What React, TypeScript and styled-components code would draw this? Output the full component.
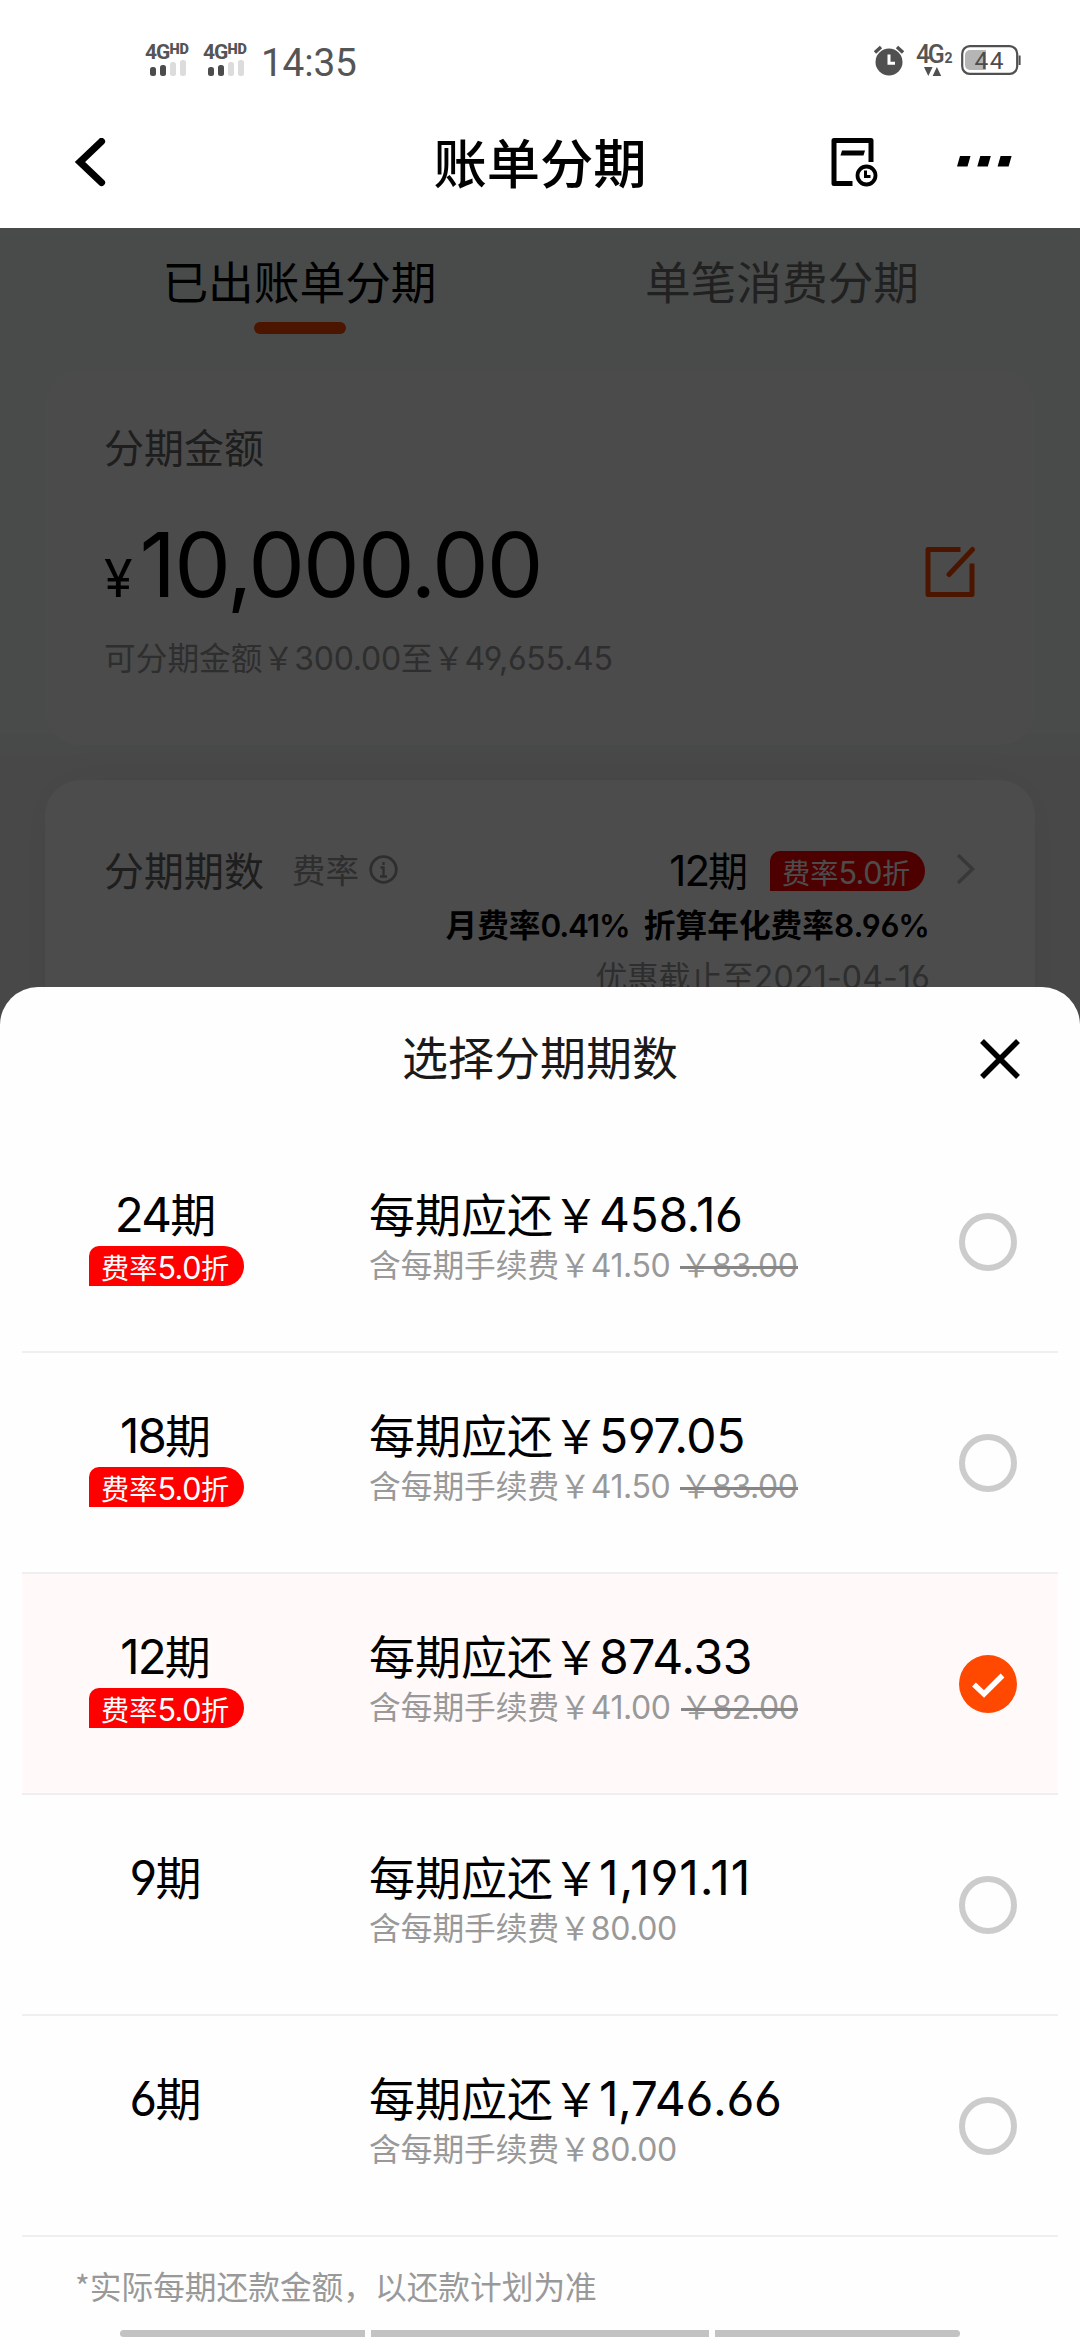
import React from "react";
import styled, { createGlobalStyle } from "styled-components";

const Global = createGlobalStyle`
  * { box-sizing: border-box; }
  html, body { margin: 0; padding: 0; background: #fff; }
  body { font-family: "Noto Sans CJK SC", sans-serif; color: #000; }
`;

const Screen = styled.div`
  position: relative;
  width: 1080px;
  height: 2340px;
  overflow: hidden;
  background: #fff;
`;

const StatusBar = styled.div`
  height: 98px;
  padding: 45px 58px 0 145px;
  display: flex;
  align-items: flex-start;
  color: #555;
  font-family: Roboto, sans-serif;
`;

const Signal = styled.div`
  width: 46px;
  margin-right: 12px;
  display: flex;
  flex-direction: column;
`;

const SignalLabel = styled.div`
  display: flex;
  align-items: flex-start;
  height: 15px;
  font-weight: 700;
  font-size: 21px;
  line-height: 15px;
  letter-spacing: -1px;
`;

const SignalHd = styled.span`
  font-size: 14.5px;
  line-height: 10px;
  letter-spacing: 0;
  font-weight: 900;
`;

const SignalBars = styled.div`
  display: flex;
  align-items: flex-end;
  gap: 4px;
  height: 16px;
  padding-left: 5px;
`;

const SignalBar = styled.i<{ $h: number; $on?: boolean }>`
  width: 6px;
  height: ${(p) => p.$h}px;
  border-radius: 2.5px;
  background: ${(p) => (p.$on ? "#4c4c4c" : "#dcdcdc")};
`;

const Clock = styled.div`
  font-size: 38.8px;
  line-height: 35px;
  letter-spacing: -0.2px;
  flex: 1;
`;

const Net = styled.div`
  width: 34px;
  margin: 0 11px 0 12px;
  display: flex;
  flex-direction: column;
`;

const NetLabel = styled.div`
  display: flex;
  align-items: flex-end;
  height: 18px;
  font-weight: 500;
  font-size: 25px;
  line-height: 17px;
  letter-spacing: -2.4px;
`;

const NetSub = styled.span`
  font-size: 14px;
  line-height: 10px;
  font-weight: 700;
  margin-left: 2px;
`;

const NavBar = styled.div`
  height: 130px;
  padding: 0 68px 0 74px;
  display: grid;
  grid-template-columns: 180px 1fr 181px;
  align-items: center;
`;

const NavTitle = styled.div`
  text-align: center;
  font-size: 53.3px;
  font-weight: 500;
  line-height: 60px;
  padding-bottom: 4px;
  padding-right: 5px;
`;

const NavActions = styled.div`
  display: flex;
  align-items: center;
  justify-content: space-between;
  height: 60px;
`;

const Page = styled.div`
  height: 2112px;
  background: linear-gradient(#f2faf6 0, #f2faf6 505px, #f2f2f2 530px);
  padding: 0 45px;
`;

const Tabs = styled.div`
  display: grid;
  grid-template-columns: 509px 456px;
  height: 142px;
  padding-top: 26px;
`;

const Tab = styled.div<{ $active?: boolean }>`
  display: flex;
  flex-direction: column;
  align-items: center;
  font-size: 45.7px;
  line-height: 52px;
  color: ${(p) => (p.$active ? "#000" : "#707070")};
`;

const TabMark = styled.i`
  width: 92px;
  height: 12px;
  margin-top: 16px;
  border-radius: 6px;
  background: #ff4800;
`;

const AmountCard = styled.div`
  height: 375px;
  border-radius: 36px;
  background: #fcfcfc;
  padding: 52px 59px 0;
`;

const TermCard = styled.div`
  height: 600px;
  margin-top: 35px;
  border-radius: 36px;
  background: #fff;
  box-shadow: 0 0 40px rgba(0, 0, 0, 0.05);
  padding: 65px 59px 0;
`;

const Label = styled.div`
  font-size: 40px;
  line-height: 48px;
  color: #666;
`;

const AmountRow = styled.div`
  display: flex;
  align-items: center;
  justify-content: space-between;
  height: 84px;
  margin-top: 60px;
`;

const Num = styled.span<{ $size: number; $track?: number; $weight?: number }>`
  font-family: Inter, "Noto Sans CJK SC", sans-serif;
  font-feature-settings: "cv03", "cv04";
  font-size: ${(p) => p.$size}px;
  letter-spacing: ${(p) => p.$track ?? 0}px;
  font-weight: ${(p) => p.$weight ?? "inherit"};
  line-height: 0;
`;

const Amount = styled.div`
  display: flex;
  align-items: baseline;
  gap: 7px;
  line-height: 84px;
`;

const Hint = styled.div`
  margin-top: 22px;
  font-size: 31.7px;
  line-height: 40px;
  color: #999;
  white-space: nowrap;
`;

const TermRow = styled.div`
  display: flex;
  align-items: center;
  height: 48px;
`;

const Rate = styled.div`
  margin-left: 28px;
  margin-right: 10px;
  font-size: 33.5px;
  line-height: 40px;
  color: #999;
`;

const TermValue = styled.div`
  margin-left: auto;
  margin-right: 22px;
  font-size: 40px;
  line-height: 46px;
  white-space: nowrap;
`;

const Tag = styled.div`
  width: 155px;
  height: 40px;
  padding-left: 12px;
  border-radius: 10px 20px 20px 0;
  background: #f00;
  color: #fff;
  font-size: 28.2px;
  line-height: 41px;
  white-space: nowrap;
`;

const TagSlot = styled.div`
  padding-top: 4px;
`;

const RateLine = styled.div`
  margin: 10px 46px 0 0;
  text-align: right;
  font-size: 31.7px;
  line-height: 40px;
  font-weight: 700;
  white-space: pre;
`;

const OfferLine = styled.div`
  margin: 12px 46px 0 0;
  text-align: right;
  font-size: 31.7px;
  line-height: 40px;
  color: #999;
  white-space: nowrap;
`;

const Chevron = styled.svg`
  margin-left: 31px;
  flex: none;
`;

const Mask = styled.div`
  position: absolute;
  left: 0;
  right: 0;
  top: 228px;
  bottom: 0;
  background: rgba(0, 0, 0, 0.7);
`;

const Sheet = styled.div`
  position: absolute;
  left: 0;
  right: 0;
  bottom: 0;
  height: 1353px;
  border-radius: 38px 38px 0 0;
  background: #fefefe;
  display: flex;
  flex-direction: column;
`;

const SheetHead = styled.div`
  height: 145px;
  padding: 0 61px 0 0;
  display: grid;
  grid-template-columns: 101px 1fr 40px;
  align-items: center;
`;

const CloseIcon = styled.svg`
  margin-top: -2px;
`;

const SheetTitle = styled.div`
  text-align: center;
  font-size: 46px;
  line-height: 54px;
  padding-bottom: 9px;
  color: #1a1a1a;
`;

const List = styled.div`
  padding: 0 22px;
`;

const Row = styled.div<{ $selected?: boolean }>`
  height: 221px;
  border-bottom: 2px solid #efefef;
  background: ${(p) => (p.$selected ? "#fffaf9" : "transparent")};
  display: grid;
  grid-template-columns: 67px 155px 125px 1fr 58px 41px;
  padding-top: 56px;
`;

const Term = styled.div`
  grid-column: 2;
  display: flex;
  flex-direction: column;
`;

const TermName = styled.div`
  text-align: center;
  font-size: 46px;
  line-height: 48px;
  height: 58px;
  padding-right: 2px;
`;

const Detail = styled.div`
  grid-column: 4;
  white-space: nowrap;
`;

const Pay = styled.div`
  font-size: 46px;
  line-height: 48px;
  height: 57px;
`;

const Fee = styled.div`
  font-size: 31.7px;
  line-height: 37px;
  color: #999;
  display: flex;
  gap: 10px;
`;

const Struck = styled.span`
  position: relative;

  &::after {
    content: "";
    position: absolute;
    left: 0;
    right: 0;
    top: 21px;
    height: 3px;
    background: #858585;
  }
`;

const Radio = styled.div<{ $on?: boolean }>`
  grid-column: 5;
  margin-top: 25px;
  width: 58px;
  height: 58px;
  border-radius: 50%;
  border: ${(p) => (p.$on ? "0" : "6px solid #ccc")};
  background: ${(p) => (p.$on ? "#ff4800" : "transparent")};
`;

const Note = styled.div`
  padding: 28px 0 0 75px;
  font-size: 31.7px;
  line-height: 40px;
  color: #999;
  flex: 1;
`;

const GestureBar = styled.div`
  display: grid;
  grid-template-columns: 245px 338px 245px;
  gap: 6px;
  padding: 0 120px 3px;
`;

const Grip = styled.i<{ $side?: "l" | "r" }>`
  height: 7px;
  background: #c2c2c2;
  border-radius: ${(p) => (p.$side === "l" ? "4px 0 0 4px" : p.$side === "r" ? "0 4px 4px 0" : "0")};
`;

interface Plan {
  term: string;
  pay: string;
  fee: string;
  was?: string;
  selected?: boolean;
}

const plans: Plan[] = [
  { term: "24", pay: "458.16", fee: "41.50", was: "83.00" },
  { term: "18", pay: "597.05", fee: "41.50", was: "83.00" },
  { term: "12", pay: "874.33", fee: "41.00", was: "82.00", selected: true },
  { term: "9", pay: "1,191.11", fee: "80.00" },
  { term: "6", pay: "1,746.66", fee: "80.00" },
];

// The figure "1" is narrow in this face, so amounts rich in ones get looser tracking.
const payTrack = (pay: string) => (pay.split("1").length > 4 ? 0.9 : -0.4);

const DiscountTag = () => (
  <Tag>
    费率<Num $size={30.5} $track={-0.5} $weight={400}>5.0</Num>折
  </Tag>
);

const SignalMeter = () => (
  <Signal>
    <SignalLabel>
      4G<SignalHd>HD</SignalHd>
    </SignalLabel>
    <SignalBars>
      <SignalBar $h={9} $on />
      <SignalBar $h={11} $on />
      <SignalBar $h={14} />
      <SignalBar $h={16} />
    </SignalBars>
  </Signal>
);

export default function App() {
  return (
    <Screen>
      <Global />
      <StatusBar>
        <SignalMeter />
        <SignalMeter />
        <Clock>14:35</Clock>
        <svg width="30" height="31" viewBox="0 0 30 31">
          <circle cx="15" cy="17" r="13.5" fill="#505050" />
          <path d="M1 7.5L7 2M29 7.5L23 2" stroke="#505050" strokeWidth="3.4" />
          <path d="M15 9.5V18.3H21" stroke="#fff" strokeWidth="3" fill="none" />
        </svg>
        <Net>
          <NetLabel>
            4G<NetSub>2</NetSub>
          </NetLabel>
          <svg width="34" height="13" viewBox="0 0 34 13">
            <path d="M8 4H16.6L12.3 13ZM16.6 13H25.2L20.9 4Z" fill="#505050" />
          </svg>
        </Net>
        <svg width="61" height="31" viewBox="0 0 61 31">
          <rect x="1.2" y="1.2" width="55" height="27.6" rx="7.5" fill="none" stroke="#505050" strokeWidth="2.2" />
          <path d="M25 5H9a5 5 0 0 0-5 5V20a5 5 0 0 0 5 5H25Z" fill="#b5b5b5" />
          <path d="M58.6 10.5V20" stroke="#505050" strokeWidth="2" />
          <text x="28" y="24.4" textAnchor="middle" fontFamily="Roboto, sans-serif" fontSize="24.5" fill="#4c4c4c" textLength="29">
            44
          </text>
        </svg>
      </StatusBar>
      <NavBar>
        <svg width="33" height="50" viewBox="0 0 33 50">
          <path d="M27.5 3.5L6 24L27.5 44.5" fill="none" stroke="#000" strokeWidth="7.2" strokeLinecap="round" />
        </svg>
        <NavTitle>账单分期</NavTitle>
        <NavActions>
          <svg width="48" height="52" viewBox="0 0 48 52">
            <path d="M21.5 46.5H3V3.5H40V25" fill="none" stroke="#000" strokeWidth="5" strokeLinejoin="round" />
            <path d="M11 13.5H34L32.5 18.5H9.5Z" fill="#000" />
            <circle cx="35.5" cy="38.500" r="9" fill="none" stroke="#000" strokeWidth="3.8" />
            <path d="M34.5 33.5V39.5H39.5" fill="none" stroke="#000" strokeWidth="3" />
          </svg>
          <svg width="55" height="14" viewBox="0 0 55 14">
            <path d="M3 0H13.5L10.5 10.5H0ZM23.3 0H33.8L30.8 10.5H20.3ZM43.6 0H54.6L51.6 10.5H40.6Z" fill="#000" />
          </svg>
        </NavActions>
      </NavBar>
      <Page>
        <Tabs>
          <Tab $active>
            已出账单分期
            <TabMark />
          </Tab>
          <Tab>单笔消费分期</Tab>
        </Tabs>
        <AmountCard>
          <Label>分期金额</Label>
          <AmountRow>
            <Amount>
              <Num $size={52} $weight={400}>¥</Num>
              <Num $size={90} $track={-2} $weight={400}>10,000.00</Num>
            </Amount>
            <svg width="52" height="54" viewBox="0 0 52 54">
              <path d="M36.5 4.5H4V49.5H48V18.5" fill="none" stroke="#ff4800" strokeWidth="5" strokeLinejoin="round" />
              <path d="M25 29.5L48.5 4.5" stroke="#ff4800" strokeWidth="5" strokeLinecap="round" />
            </svg>
          </AmountRow>
          <Hint>
            可分期金额￥<Num $size={32} $track={-0.2} $weight={400}>300.00</Num>至￥<Num $size={32} $track={-0.2} $weight={400}>49,655.45</Num>
          </Hint>
        </AmountCard>
        <TermCard>
          <TermRow>
            <Label>分期期数</Label>
            <Rate>费率</Rate>
            <svg width="29" height="29" viewBox="0 0 29 29">
              <circle cx="14.5" cy="14.5" r="12.8" fill="none" stroke="#999" strokeWidth="2.8" />
              <path d="M14.5 7V10M11.5 12.5H14.5V21.5M11 21.5H18" fill="none" stroke="#999" strokeWidth="2.4" />
            </svg>
            <TermValue>
              <Num $size={42} $track={-2} $weight={400}>12</Num>期
            </TermValue>
            <TagSlot>
              <DiscountTag />
            </TagSlot>
            <Chevron width="20" height="32" viewBox="0 0 20 32">
              <path d="M2 2L16.5 16L2 30" fill="none" stroke="#bbb" strokeWidth="3.5" />
            </Chevron>
          </TermRow>
          <RateLine>
            月费率<Num $size={31.5} $track={-1.2} $weight={600}>0.41%</Num>{"  "}折算年化费率<Num $size={31.5} $track={0} $weight={600}>8.96%</Num>
          </RateLine>
          <OfferLine>
            优惠截止至<Num $size={32} $track={0.2} $weight={400}>2021-04-16</Num>
          </OfferLine>
        </TermCard>
      </Page>
      <Mask />
      <Sheet>
        <SheetHead>
          <span />
          <SheetTitle>选择分期期数</SheetTitle>
          <CloseIcon width="42" height="42" viewBox="0 0 42 42">
            <path d="M3 3L39 39M39 3L3 39" stroke="#000" strokeWidth="5.5" />
          </CloseIcon>
        </SheetHead>
        <List>
          {plans.map((p) => (
            <Row key={p.term} $selected={p.selected}>
              <Term>
                <TermName>
                  <Num $size={47.5} $track={-1.8} $weight={400}>{p.term}</Num>期
                </TermName>
                {p.was && <DiscountTag />}
              </Term>
              <Detail>
                <Pay>
                  每期应还￥<Num $size={48} $track={payTrack(p.pay)} $weight={400}>{p.pay}</Num>
                </Pay>
                <Fee>
                  <span>
                    含每期手续费￥<Num $size={32} $track={-0.4} $weight={400}>{p.fee}</Num>
                  </span>
                  {p.was && (
                    <Struck>
                      ￥<Num $size={32} $track={-0.4} $weight={400}>{p.was}</Num>
                    </Struck>
                  )}
                </Fee>
              </Detail>
              <Radio $on={p.selected}>
                {p.selected && (
                  <svg width="58" height="58" viewBox="0 0 58 58">
                    <path d="M15 29.5L25 39L43.5 20.5" fill="none" stroke="#fff" strokeWidth="5.5" />
                  </svg>
                )}
              </Radio>
            </Row>
          ))}
        </List>
        <Note>*实际每期还款金额，以还款计划为准</Note>
        <GestureBar>
          <Grip $side="l" />
          <Grip />
          <Grip $side="r" />
        </GestureBar>
      </Sheet>
    </Screen>
  );
}
